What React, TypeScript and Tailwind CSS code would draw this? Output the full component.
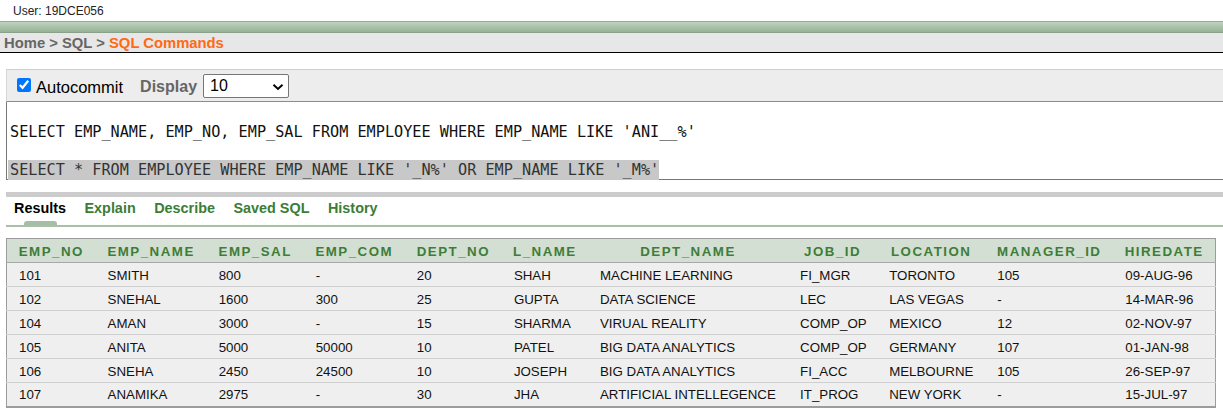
import React from 'react';

const columns = [
  { key: 'EMP_NO', width: 'w-[89px]' },
  { key: 'EMP_NAME', width: 'w-[111px]' },
  { key: 'EMP_SAL', width: 'w-[97px]' },
  { key: 'EMP_COM', width: 'w-[101px]' },
  { key: 'DEPT_NO', width: 'w-[97px]' },
  { key: 'L_NAME', width: 'w-[86px]' },
  { key: 'DEPT_NAME', width: 'w-[200px]' },
  { key: 'JOB_ID', width: 'w-[89px]' },
  { key: 'LOCATION', width: 'w-[108px]' },
  { key: 'MANAGER_ID', width: 'w-[128px]' },
  { key: 'HIREDATE', width: 'w-[102px]' },
];

const rows = [
  ['101', 'SMITH', '800', '-', '20', 'SHAH', 'MACHINE LEARNING', 'FI_MGR', 'TORONTO', '105', '09-AUG-96'],
  ['102', 'SNEHAL', '1600', '300', '25', 'GUPTA', 'DATA SCIENCE', 'LEC', 'LAS VEGAS', '-', '14-MAR-96'],
  ['104', 'AMAN', '3000', '-', '15', 'SHARMA', 'VIRUAL REALITY', 'COMP_OP', 'MEXICO', '12', '02-NOV-97'],
  ['105', 'ANITA', '5000', '50000', '10', 'PATEL', 'BIG DATA ANALYTICS', 'COMP_OP', 'GERMANY', '107', '01-JAN-98'],
  ['106', 'SNEHA', '2450', '24500', '10', 'JOSEPH', 'BIG DATA ANALYTICS', 'FI_ACC', 'MELBOURNE', '105', '26-SEP-97'],
  ['107', 'ANAMIKA', '2975', '-', '30', 'JHA', 'ARTIFICIAL INTELLEGENCE', 'IT_PROG', 'NEW YORK', '-', '15-JUL-97'],
];

const tabs = ['Results', 'Explain', 'Describe', 'Saved SQL', 'History'];

const App: React.FC = () => {
  return (
    <div className="min-h-screen bg-white font-['Liberation_Sans',Arial,sans-serif] text-black">
      {/* user line */}
      <div className="h-[21px] pl-[13px] pt-[4px] text-[12px] leading-[14px] text-[#222]">User: 19DCE056</div>

      {/* green bar */}
      <div className="h-[12px] border-t border-b border-t-[#9aa89a] border-b-[#8aa08a] bg-gradient-to-b from-[#bdd3bd] to-[#96b296]"></div>

      {/* breadcrumb */}
      <div className="h-[20px] border-b border-black bg-[#e6e7e6] pl-[4px] pt-[1px] text-[14.8px] font-bold leading-[19px] text-[#666]">
        Home &gt; SQL &gt; <span className="text-[#ff6a13]">SQL Commands</span>
      </div>

      <div className="pl-[6px] pt-[16px]">
        {/* toolbar */}
        <div className="flex h-[33px] items-center border-t border-b border-l border-t-[#cfcfcf] border-b-[#8c8c8c] border-l-[#d6d6d6] bg-[#ededed] pl-[10px] pt-[2px]">
          <input
            type="checkbox"
            defaultChecked
            className="m-0 h-[14px] w-[14px] -translate-y-[2px] accent-[#0075ff]"
          />
          <span className="ml-[5px] text-[16.5px] leading-[20px]">Autocommit</span>
          <span className="ml-[17px] text-[16px] font-bold leading-[20px] text-[#666]">Display</span>
          <div className="ml-[6px] flex h-[24px] w-[86px] -translate-y-[1px] items-center justify-between rounded-[2px] border border-[#767676] bg-white pl-[6px] pr-[4px]">
            <span className="text-[16px] leading-[20px]">10</span>
            <svg width="12" height="8" viewBox="0 0 12 8" className="mt-[2px]">
              <path d="M1.5 1.8 L6 6 L10.5 1.8" fill="none" stroke="#000" strokeWidth="2" />
            </svg>
          </div>
        </div>

        {/* sql editor */}
        <div className="h-[78px] border-l border-b border-[#767676] bg-white pl-[1px] pt-[21px] font-['DejaVu_Sans_Mono',monospace] text-[15.2px] leading-[19px] text-[#111] whitespace-pre">
          <div className="pl-[2px]">SELECT EMP_NAME, EMP_NO, EMP_SAL FROM EMPLOYEE WHERE EMP_NAME LIKE 'ANI__%'</div>
          <div className="mt-[18px] h-[20px]">
            <span className="inline-block h-[20px] bg-[#c8c8c8] pl-[2px] leading-[20px] text-[#333]">SELECT * FROM EMPLOYEE WHERE EMP_NAME LIKE '_N%' OR EMP_NAME LIKE '_M%'</span>
          </div>
        </div>

        {/* tabs */}
        <div className="mt-[12px] h-[5px] bg-[#cccccc]"></div>
        <div className="flex h-[20px] items-center gap-[18.5px] pl-[8px] pt-[2px] text-[14.4px] font-bold leading-[18px]">
          {tabs.map((t, i) => (
            <span key={t} className={i === 0 ? 'text-black' : 'text-[#3b7d35]'}>
              {t}
            </span>
          ))}
        </div>
        <div className="flex h-[8px] items-end">
          <div className="ml-[18px] h-[4px] w-[33px] rounded-t-[3px] bg-[#a6bea6]"></div>
        </div>
        <div className="h-[2px] bg-[#a8c0a8]"></div>

        {/* results table */}
        <table className="mt-[11px] w-[1210px] table-fixed border-collapse border border-[#9c9c9c] border-b-2 text-[13.3px]">
          <thead>
            <tr className="h-[24px] border-b border-[#a8a8a8] bg-[#d3dfd3]">
              {columns.map((c) => (
                <th
                  key={c.key}
                  className={`${c.width} px-0 pt-[2px] pb-0 text-center text-[13.3px] font-bold leading-[16px] tracking-[1.5px] text-[#3e7d38]`}
                >
                  {c.key}
                </th>
              ))}
            </tr>
          </thead>
          <tbody>
            {rows.map((r, i) => (
              <tr key={i} className="h-[24px] border-b border-[#cfcfcf] bg-[#efefef] last:border-b-0">
                {r.map((v, j) => (
                  <td key={j} className="truncate pt-[2px] pb-0 pl-[12px] pr-0 leading-[16px] text-[#111]">
                    {v}
                  </td>
                ))}
              </tr>
            ))}
          </tbody>
        </table>
      </div>
    </div>
  );
};

export default App;
